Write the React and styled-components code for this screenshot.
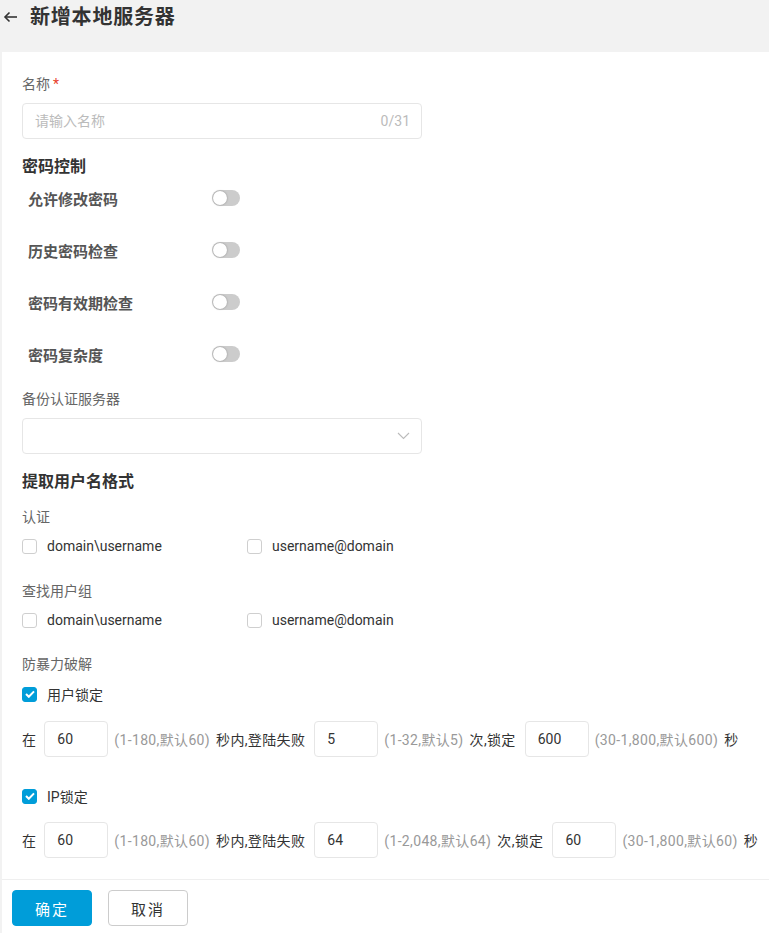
import React, { useState } from 'react';
import styled, { createGlobalStyle } from 'styled-components';

const GlobalStyle = createGlobalStyle`
    body {
        margin: 0;
        background: #f2f2f2;
        font-family: Roboto, "Noto Sans CJK SC", sans-serif;
        color: #333;
    }
    * { box-sizing: border-box; }
`

const Page = styled.div`
    display: flex;
    flex-direction: column;
    min-height: 100vh;
`

const Header = styled.div`
    height: 52px;
    display: flex;
    align-items: flex-start;
    gap: 12px;
    padding: 5px 0 0 3px;
`

const BackButton = styled.button`
    border: none;
    background: none;
    padding: 0;
    width: 15px;
    height: 24px;
    display: flex;
    align-items: center;
    cursor: pointer;
`

const Title = styled.h1`
    margin: 0;
    font-size: 20px;
    line-height: 24px;
    font-weight: bold;
    color: #333;
    letter-spacing: 0.8px;
`

const Card = styled.div`
    flex: 1;
    margin-left: 2px;
    background: #fff;
    padding: 22px 20px 20px;
`

const FieldLabel = styled.div`
    font-size: 14px;
    line-height: 20px;
    color: #666;
    margin-top: ${p => p.$top || 0}px;
`

const Required = styled.span`
    color: #e8412c;
    margin-left: 3px;
`

const InputBox = styled.div`
    width: 400px;
    height: 36px;
    margin-top: 9px;
    border: 1px solid #e6e6e6;
    border-radius: 4px;
    display: flex;
    align-items: center;
    padding: 0 11px 0 12px;
    font-size: 14px;
`

const TextInput = styled.input`
    flex: 1;
    border: none;
    outline: none;
    font: inherit;
    color: #333;
    padding: 0;
    &::placeholder { color: #bbb; }
`

const Counter = styled.span`
    color: #bbb;
    font-size: 14px;
`

const SectionTitle = styled.h2`
    margin: ${p => p.$top || 16}px 0 0;
    font-size: 16px;
    line-height: 23px;
    font-weight: bold;
    color: #333;
`

const ToggleList = styled.div`
    display: flex;
    flex-direction: column;
    gap: 12px;
    padding-left: 6px;
`

const ToggleRow = styled.div`
    height: 40px;
    display: flex;
    align-items: center;
`

const ToggleLabel = styled.span`
    width: 184px;
    font-size: 15px;
    font-weight: bold;
    color: #555;
`

const Switch = styled.button`
    width: 28px;
    height: 16px;
    border: none;
    border-radius: 8px;
    background: ${p => (p.$on ? '#009dd9' : '#cccccc')};
    padding: 1px;
    display: flex;
    justify-content: ${p => (p.$on ? 'flex-end' : 'flex-start')};
    cursor: pointer;
`

const Knob = styled.span`
    width: 14px;
    height: 14px;
    border-radius: 50%;
    background: #fff;
    box-shadow: 0 0 2px rgba(0, 0, 0, 0.35);
`

const SelectBox = styled(InputBox)`
    justify-content: flex-end;
    padding-right: 11px;
    cursor: pointer;
`

const CheckGrid = styled.div`
    display: grid;
    grid-template-columns: 225px 225px;
    margin-top: 9px;
`

const CheckItem = styled.label`
    display: flex;
    align-items: center;
    gap: 10px;
    height: 20px;
    font-size: 14px;
    color: #333;
    cursor: pointer;
    margin-top: ${p => p.$top || 0}px;
`

const Box = styled.span`
    width: 15px;
    height: 15px;
    border-radius: 3px;
    border: 1px solid ${p => (p.$checked ? '#009dd9' : '#cfcfcf')};
    background: ${p => (p.$checked ? '#009dd9' : '#fff')};
    display: flex;
    align-items: center;
    justify-content: center;
`

const LockRow = styled.div`
    display: flex;
    align-items: center;
    gap: 6px;
    margin-top: ${p => p.$top || 0}px;
    font-size: 14px;
    color: #333;
    white-space: nowrap;
    letter-spacing: 0.35px;
`

const Prefix = styled.span`
    margin-right: 2px;
`

const Unit = styled.span`
    margin-right: 3px;
`

const NumberInput = styled.input`
    width: 64px;
    height: 36px;
    border: 1px solid #e6e6e6;
    border-radius: 4px;
    padding: 0 12px;
    font: inherit;
    color: #333;
    outline: none;
`

const Hint = styled.span`
    color: #999;
`

const Footer = styled.div`
    margin-left: 2px;
    background: #fff;
    border-top: 1px solid #efefef;
    padding: 10px 10px 7px;
    display: flex;
    gap: 16px;
`

const Button = styled.button`
    width: 80px;
    height: 36px;
    border-radius: 4px;
    font-family: inherit;
    font-size: 15px;
    letter-spacing: 2px;
    cursor: pointer;
    border: 1px solid ${p => (p.$primary ? '#009dd9' : '#cccccc')};
    background: ${p => (p.$primary ? '#009dd9' : '#fff')};
    color: ${p => (p.$primary ? '#fff' : '#333')};
`

const ArrowLeft = () => (
    <svg width="15" height="12" viewBox="0 0 15 12" fill="none" stroke="#333" strokeWidth="1.6">
        <path d="M14 6H2" />
        <path d="M6.5 1.5L2 6l4.5 4.5" />
    </svg>
)

const Chevron = () => (
    <svg width="13" height="8" viewBox="0 0 13 8" fill="none" stroke="#bbb" strokeWidth="1.1">
        <path d="M1 1l5.5 5.5L12 1" />
    </svg>
)

const Tick = () => (
    <svg width="10" height="8" viewBox="0 0 10 8" fill="none" stroke="#fff" strokeWidth="2">
        <path d="M1 4l2.8 2.8L9 1.4" />
    </svg>
)

const Checkbox = ({ checked, onChange, children, top }) => (
    <CheckItem $top={top} onClick={onChange}>
        <Box $checked={checked}>{checked && <Tick />}</Box>
        {children}
    </CheckItem>
)

const toggles = ['允许修改密码', '历史密码检查', '密码有效期检查', '密码复杂度'];

const lockRows = [
    { key: 'user', label: '用户锁定', values: ['60', '5', '600'], hints: ['(1-180,默认60)', '(1-32,默认5)', '(30-1,800,默认600)'] },
    { key: 'ip', label: 'IP锁定', values: ['60', '64', '60'], hints: ['(1-180,默认60)', '(1-2,048,默认64)', '(30-1,800,默认60)'] }
];

const App = () => {
    const [switches, setSwitches] = useState([false, false, false, false]);
    const [formats, setFormats] = useState({ a1: false, a2: false, g1: false, g2: false, user: true, ip: true });
    const [name, setName] = useState('');

    const flip = key => setFormats({ ...formats, [key]: !formats[key] });

    return (
        <Page>
            <GlobalStyle />
            <Header>
                <BackButton><ArrowLeft /></BackButton>
                <Title>新增本地服务器</Title>
            </Header>
            <Card>
                <FieldLabel>名称<Required>*</Required></FieldLabel>
                <InputBox>
                    <TextInput
                        placeholder="请输入名称"
                        value={name}
                        maxLength={31}
                        onChange={e => setName(e.target.value)}
                    />
                    <Counter>{name.length}/31</Counter>
                </InputBox>

                <SectionTitle>密码控制</SectionTitle>
                <ToggleList>
                    {toggles.map((t, i) => (
                        <ToggleRow key={t}>
                            <ToggleLabel>{t}</ToggleLabel>
                            <Switch
                                $on={switches[i]}
                                onClick={() => setSwitches(switches.map((s, j) => (j === i ? !s : s)))}
                            >
                                <Knob />
                            </Switch>
                        </ToggleRow>
                    ))}
                </ToggleList>

                <FieldLabel $top={15}>备份认证服务器</FieldLabel>
                <SelectBox><Chevron /></SelectBox>

                <SectionTitle>提取用户名格式</SectionTitle>
                <FieldLabel $top={14}>认证</FieldLabel>
                <CheckGrid>
                    <Checkbox checked={formats.a1} onChange={() => flip('a1')}>domain\username</Checkbox>
                    <Checkbox checked={formats.a2} onChange={() => flip('a2')}>username@domain</Checkbox>
                </CheckGrid>
                <FieldLabel $top={25}>查找用户组</FieldLabel>
                <CheckGrid>
                    <Checkbox checked={formats.g1} onChange={() => flip('g1')}>domain\username</Checkbox>
                    <Checkbox checked={formats.g2} onChange={() => flip('g2')}>username@domain</Checkbox>
                </CheckGrid>

                <FieldLabel $top={24}>防暴力破解</FieldLabel>
                {lockRows.map((row, i) => (
                    <React.Fragment key={row.key}>
                        <Checkbox top={i === 0 ? 10 : 29} checked={formats[row.key]} onChange={() => flip(row.key)}>
                            {row.label}
                        </Checkbox>
                        <LockRow $top={i === 0 ? 17 : 16}>
                            <Prefix>在</Prefix>
                            <NumberInput defaultValue={row.values[0]} />
                            <Hint>{row.hints[0]}</Hint>
                            <Unit>秒内,登陆失败</Unit>
                            <NumberInput defaultValue={row.values[1]} />
                            <Hint>{row.hints[1]}</Hint>
                            <Unit>次,锁定</Unit>
                            <NumberInput defaultValue={row.values[2]} />
                            <Hint>{row.hints[2]}</Hint>
                            <span>秒</span>
                        </LockRow>
                    </React.Fragment>
                ))}
            </Card>
            <Footer>
                <Button $primary>确定</Button>
                <Button>取消</Button>
            </Footer>
        </Page>
    );
};

export default App;
